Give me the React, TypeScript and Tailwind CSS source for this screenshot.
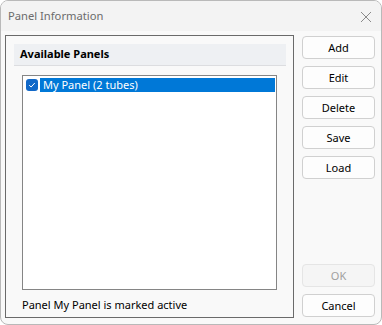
import React from "react";

const font = { fontFamily: '"Noto Sans", "Segoe UI", sans-serif' };

function DlgButton({ label, disabled }: { label: string; disabled?: boolean }) {
  return (
    <button
      disabled={disabled}
      className={`w-[73px] h-[23px] shrink-0 rounded-[4px] border text-[11px] leading-none flex items-center justify-center ${
        disabled ? "border-[#e5e5e5] bg-[#f5f5f5] text-[#a0a0a0]" : "border-[#d0d0d0] bg-[#fdfdfd] text-black"
      }`}
    >
      {label}
    </button>
  );
}

export default function App() {
  return (
    <div className="w-[382px] h-[325px] bg-white" style={font}>
      <div className="w-full h-full rounded-[8px] border border-[#b9b9b9] bg-[#f9f9f9] overflow-hidden flex flex-col">
        {/* Title bar */}
        <div className="h-[30px] bg-[#f3f3f3] flex items-center justify-between pl-[7px] pr-[9px] shrink-0">
          <span className="text-[11.2px] text-[#6b6b6b]">Panel Information</span>
          <svg width="12" height="12" viewBox="0 0 12 12" className="mt-[1px]">
            <path d="M1 1 L11 11 M11 1 L1 11" stroke="#8a8a8a" strokeWidth="1" fill="none" />
          </svg>
        </div>

        {/* Body */}
        <div className="flex-1 flex pl-[4px] pt-[4px] gap-[8px]">
          {/* Group box */}
          <div className="w-[289px] h-[283px] shrink-0 border border-[#6a6a6a] flex flex-col px-[8px] pt-[8px]">
            <div className="h-[22px] shrink-0 bg-[#eef0f3] border-b border-[#dcdde0] flex items-center pl-[6px] mr-[-1px]">
              <span className="text-[11px] font-bold text-black">Available Panels</span>
            </div>
            <div className="mt-[9px] ml-[8px] w-[255px] h-[215px] shrink-0 border border-[#858585] bg-white pt-[2px] pl-[2px]">
              <div className="flex items-center h-[14px]">
                <div className="w-[12px] h-[12px] rounded-[3px] bg-[#1168c8] flex items-center justify-center ml-[1px]">
                  <svg width="8" height="8" viewBox="0 0 8 8">
                    <path d="M1.2 4.2 L3.1 6 L6.8 2" stroke="white" strokeWidth="1" fill="none" />
                  </svg>
                </div>
                <div className="ml-[2px] flex-1 mr-[1px] h-[14px] bg-[#0078d7] text-white text-[11px] leading-[14px] pl-[3px]">
                  My Panel (2 tubes)
                </div>
              </div>
            </div>
            <div className="mt-[8px] ml-[8px] shrink-0 text-[11px] text-black leading-[14px]">
              Panel My Panel is marked active
            </div>
          </div>

          {/* Buttons */}
          <div className="flex flex-col pt-[1px] pb-[7px]">
            <div className="flex flex-col gap-[7px]">
              <DlgButton label="Add" />
              <DlgButton label="Edit" />
              <DlgButton label="Delete" />
              <DlgButton label="Save" />
              <DlgButton label="Load" />
            </div>
            <div className="mt-auto flex flex-col gap-[7px]">
              <DlgButton label="OK" disabled />
              <DlgButton label="Cancel" />
            </div>
          </div>
        </div>
      </div>
    </div>
  );
}
